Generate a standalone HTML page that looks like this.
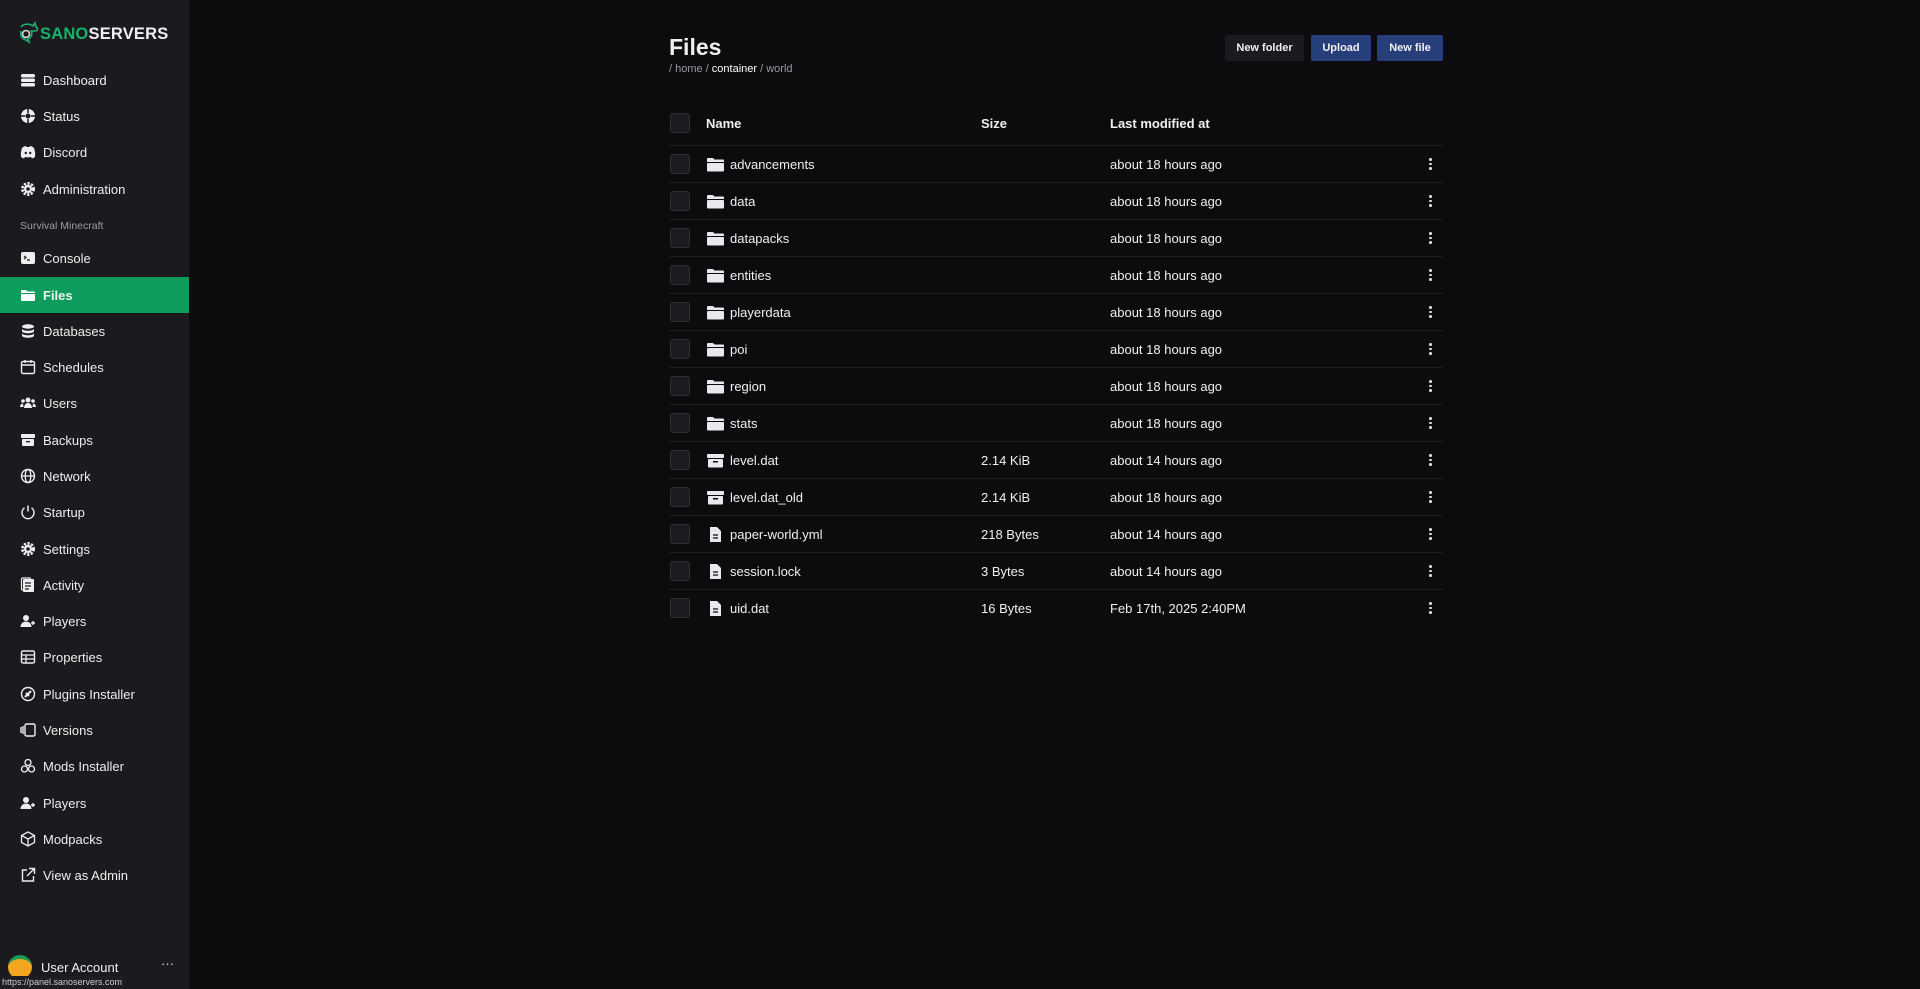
<!DOCTYPE html>
<html><head><meta charset="utf-8"><style>
*{box-sizing:border-box;margin:0;padding:0}
body{width:1920px;height:989px;background:#0c0c0e;font-family:"Liberation Sans",sans-serif;color:#f0f0f2;overflow:hidden;position:relative}
#side{position:absolute;left:0;top:0;width:189px;height:989px;background:#1b1b1f}
.logo{position:absolute;left:17px;top:21px;font-weight:bold;font-size:16.5px;letter-spacing:.2px}
.logo .g{color:#16b36a}
.nav{position:absolute;left:0;width:189px;height:36px;display:flex;align-items:center;font-size:13px;color:#eee}
.nav svg{position:absolute;left:20px;width:16px;height:16px}
.nav span{position:absolute;left:43px}
.nav.act{background:#0d9c5c;font-weight:bold}
.lbl{position:absolute;left:20px;top:220px;font-size:10.5px;color:#9a9aa3}
h1{position:absolute;left:669px;top:34px;font-size:23px;font-weight:bold}
.bc{position:absolute;left:669px;top:63px;font-size:11px;color:#9a9aa0}
.bc b{color:#fff;font-weight:normal}
.btn{position:absolute;top:35px;height:26px;font-size:11px;font-weight:bold;display:flex;align-items:center;justify-content:center;border-radius:2px}
.cb{position:absolute;left:670px;width:20px;height:20px;border:1px solid #2e2e33;background:#1c1c20;border-radius:3px}
.row{position:absolute;left:669px;width:774px;height:37px;border-top:1px solid #1e1e22;font-size:13px}
.row .t{position:absolute;top:11px}
.row svg{position:absolute;left:38px;top:11px}
.dots{position:absolute;left:760px;top:12px;width:3px}
.dots i{display:block;width:2.5px;height:2.5px;background:#ddd;border-radius:50%;margin-bottom:2px}
</style></head><body>
<div id="side">
<div class="logo"><svg width="22" height="24" viewBox="0 0 22 24" style="vertical-align:-6px;margin-right:1px"><path d="M4 6c2-3 8-4 12-1l2-3 1 4c2 1 2 3 0 4h-5c2 3 0 7-3 8l1 3-3-2c-4-1-6-5-5-9" fill="none" stroke="#16b36a" stroke-width="1.6"/><circle cx="9" cy="13" r="3.5" fill="none" stroke="#ddd" stroke-width="1.6"/></svg><span class="g">SANO</span>SERVERS</div>
<div class="nav" style="top:62px"><svg viewBox="0 0 16 16"><rect x="1" y="2" width="14" height="3.5" rx="1.5" fill="#eee"/><rect x="1" y="6.5" width="14" height="3.5" rx="1.5" fill="#eee"/><rect x="1" y="11" width="14" height="3.5" rx="1.5" fill="#eee"/></svg><span>Dashboard</span></div>
<div class="nav" style="top:98px"><svg viewBox="0 0 16 16"><circle cx="8" cy="8" r="7" fill="#eee"/><circle cx="8" cy="8" r="2.5" fill="#1b1b1f"/><path d="M8 1v4M8 11v4M1 8h4M11 8h4" stroke="#1b1b1f" stroke-width="1.5"/></svg><span>Status</span></div>
<div class="nav" style="top:134px"><svg viewBox="0 0 16 16"><path d="M2 4c2-2 4-2 4-2l.5 1h3l.5-1s2 0 4 2c1 3 1.5 6 1 9-1.5 1-3 1.5-3 1.5l-1-1.5c-2 .5-4 .5-6 0l-1 1.5S2.5 14 1 13c-.5-3 0-6 1-9z" fill="#eee"/><circle cx="5.8" cy="9" r="1.2" fill="#1b1b1f"/><circle cx="10.2" cy="9" r="1.2" fill="#1b1b1f"/></svg><span>Discord</span></div>
<div class="nav" style="top:171px"><svg viewBox="0 0 16 16"><circle cx="8" cy="8" r="5.5" fill="none" stroke="#eee" stroke-width="3" stroke-dasharray="2.2 1.4"/><circle cx="8" cy="8" r="4" fill="#eee"/><circle cx="8" cy="8" r="1.8" fill="#1b1b1f"/></svg><span>Administration</span></div>
<div class="lbl">Survival Minecraft</div>
<div class="nav" style="top:240px"><svg viewBox="0 0 16 16"><rect x="1" y="2" width="14" height="12" rx="2" fill="#eee"/><path d="M4 6l2 1.5L4 9M7 10h3" stroke="#1b1b1f" stroke-width="1.2" fill="none"/></svg><span>Console</span></div>
<div class="nav act" style="top:277px"><svg viewBox="0 0 16 16"><path d="M1 4a1 1 0 011-1h4l1.5 1.5H14a1 1 0 011 1V6H1z" fill="#fff"/><rect x="1" y="7" width="14" height="7" rx="1" fill="#fff"/></svg><span>Files</span></div>
<div class="nav" style="top:313px"><svg viewBox="0 0 16 16"><ellipse cx="8" cy="3.5" rx="6" ry="2.2" fill="#eee"/><path d="M2 5.5c0 3 12 3 12 0v2.5c0 3-12 3-12 0zM2 10c0 3 12 3 12 0v2.5c0 3-12 3-12 0z" fill="#eee"/></svg><span>Databases</span></div>
<div class="nav" style="top:349px"><svg viewBox="0 0 16 16"><rect x="1.5" y="2.5" width="13" height="12" rx="1.5" fill="none" stroke="#eee" stroke-width="1.4"/><path d="M1.5 6h13M5 1v3M11 1v3" stroke="#eee" stroke-width="1.4"/></svg><span>Schedules</span></div>
<div class="nav" style="top:385px"><svg viewBox="0 0 16 16"><circle cx="8" cy="5" r="2.5" fill="#eee"/><circle cx="3" cy="6" r="1.8" fill="#eee"/><circle cx="13" cy="6" r="1.8" fill="#eee"/><path d="M4 13c0-3 2-5 4-5s4 2 4 5zM0 12c0-2 1.5-3.5 3-3.5L3.5 12zM16 12c0-2-1.5-3.5-3-3.5L12.5 12z" fill="#eee"/></svg><span>Users</span></div>
<div class="nav" style="top:422px"><svg viewBox="0 0 16 16"><rect x="1" y="2" width="14" height="4" rx="1" fill="#eee"/><rect x="2" y="7" width="12" height="7" rx="1" fill="#eee"/><rect x="6" y="9" width="4" height="1.3" fill="#1b1b1f"/></svg><span>Backups</span></div>
<div class="nav" style="top:458px"><svg viewBox="0 0 16 16"><circle cx="8" cy="8" r="6.5" fill="none" stroke="#eee" stroke-width="1.4"/><ellipse cx="8" cy="8" rx="2.8" ry="6.5" fill="none" stroke="#eee" stroke-width="1.3"/><path d="M1.5 8h13" stroke="#eee" stroke-width="1.3"/></svg><span>Network</span></div>
<div class="nav" style="top:494px"><svg viewBox="0 0 16 16"><path d="M8 1.5v6" stroke="#eee" stroke-width="1.5"/><path d="M4.5 3.8a6 6 0 107 0" fill="none" stroke="#eee" stroke-width="1.4"/></svg><span>Startup</span></div>
<div class="nav" style="top:531px"><svg viewBox="0 0 16 16"><circle cx="8" cy="8" r="5.5" fill="none" stroke="#eee" stroke-width="3" stroke-dasharray="2.2 1.4"/><circle cx="8" cy="8" r="4" fill="#eee"/><circle cx="8" cy="8" r="1.8" fill="#1b1b1f"/></svg><span>Settings</span></div>
<div class="nav" style="top:567px"><svg viewBox="0 0 16 16"><rect x="3" y="2" width="11" height="13" rx="1" fill="#eee"/><rect x="1.5" y="1" width="9" height="12" rx="1" fill="none" stroke="#eee" stroke-width="1.2"/><path d="M5 6h6M5 9h6M5 12h4" stroke="#1b1b1f" stroke-width="1.2"/></svg><span>Activity</span></div>
<div class="nav" style="top:603px"><svg viewBox="0 0 16 16"><circle cx="6" cy="5" r="3" fill="#eee"/><path d="M0.5 14c0-3.5 2.5-5.5 5.5-5.5s5.5 2 5.5 5.5z" fill="#eee"/><path d="M11 10h4M13 8v4" stroke="#eee" stroke-width="1.4"/></svg><span>Players</span></div>
<div class="nav" style="top:639px"><svg viewBox="0 0 16 16"><rect x="1.5" y="2" width="13" height="12" rx="1.5" fill="none" stroke="#eee" stroke-width="1.4"/><path d="M1.5 6h13M1.5 10h13M6 6v8" stroke="#eee" stroke-width="1.3"/></svg><span>Properties</span></div>
<div class="nav" style="top:676px"><svg viewBox="0 0 16 16"><circle cx="8" cy="8" r="6.5" fill="none" stroke="#eee" stroke-width="1.4"/><path d="M5 11l6-6M6 7l3 3" stroke="#eee" stroke-width="2"/></svg><span>Plugins Installer</span></div>
<div class="nav" style="top:712px"><svg viewBox="0 0 16 16"><rect x="5" y="2" width="10" height="12" rx="1.5" fill="none" stroke="#eee" stroke-width="1.4"/><path d="M3 4v8M1 5v6" stroke="#eee" stroke-width="1.4"/></svg><span>Versions</span></div>
<div class="nav" style="top:748px"><svg viewBox="0 0 16 16"><g fill="none" stroke="#eee" stroke-width="1.3"><circle cx="8" cy="4.5" r="3"/><circle cx="4.5" cy="11" r="3"/><circle cx="11.5" cy="11" r="3"/></g></svg><span>Mods Installer</span></div>
<div class="nav" style="top:785px"><svg viewBox="0 0 16 16"><circle cx="6" cy="5" r="3" fill="#eee"/><path d="M0.5 14c0-3.5 2.5-5.5 5.5-5.5s5.5 2 5.5 5.5z" fill="#eee"/><path d="M11 10h4M13 8v4" stroke="#eee" stroke-width="1.4"/></svg><span>Players</span></div>
<div class="nav" style="top:821px"><svg viewBox="0 0 16 16"><path d="M8 1l6.5 3.5v7L8 15l-6.5-3.5v-7z M1.5 4.5L8 8l6.5-3.5M8 8v7" fill="none" stroke="#eee" stroke-width="1.3"/></svg><span>Modpacks</span></div>
<div class="nav" style="top:857px"><svg viewBox="0 0 16 16"><path d="M7 3H2.5v11h11V9" fill="none" stroke="#eee" stroke-width="1.4"/><path d="M9 1.5h5.5V7M14.5 1.5L7 9" fill="none" stroke="#eee" stroke-width="1.4"/></svg><span>View as Admin</span></div>
<div style="position:absolute;left:8px;top:955px;width:24px;height:24px;border-radius:50%;background:#f2a51e;border-top:4px solid #1a9c58"></div>
<div style="position:absolute;left:41px;top:960px;font-size:13px">User Account</div>
<div style="position:absolute;left:161px;top:956px;font-size:13px;color:#ddd">···</div>
<div style="position:absolute;left:0;top:976px;height:13px;width:124px;background:#1e1e22;font-size:9px;color:#ccc;padding:1px 2px;border-radius:0 3px 0 0">https://panel.sanoservers.com</div>
</div>
<h1>Files</h1>
<div class="bc">/ home / <b>container</b> / world</div>
<div class="btn" style="left:1225px;width:79px;background:#1b1b1f">New folder</div>
<div class="btn" style="left:1311px;width:60px;background:#263f7b">Upload</div>
<div class="btn" style="left:1377px;width:66px;background:#263f7b">New file</div>
<div class="cb" style="top:113px"></div>
<div style="position:absolute;top:116px;font-size:13px;font-weight:bold;left:706px">Name</div>
<div style="position:absolute;top:116px;font-size:13px;font-weight:bold;left:981px">Size</div>
<div style="position:absolute;top:116px;font-size:13px;font-weight:bold;left:1110px">Last modified at</div>
<div id="rows"></div>
<script>
var d=[["advancements","","about 18 hours ago",0],["data","","about 18 hours ago",0],["datapacks","","about 18 hours ago",0],["entities","","about 18 hours ago",0],["playerdata","","about 18 hours ago",0],["poi","","about 18 hours ago",0],["region","","about 18 hours ago",0],["stats","","about 18 hours ago",0],["level.dat","2.14 KiB","about 14 hours ago",1],["level.dat_old","2.14 KiB","about 18 hours ago",1],["paper-world.yml","218 Bytes","about 14 hours ago",2],["session.lock","3 Bytes","about 14 hours ago",2],["uid.dat","16 Bytes","Feb 17th, 2025 2:40PM",2]];
var ic=['<svg width="17" height="15" viewBox="0 0 17 15"><path d="M0 2a1 1 0 011-1h5l1.5 1.5H16a1 1 0 011 1V5H0z" fill="#e8e8ee"/><rect x="0" y="6" width="17" height="8.5" rx="1" fill="#e8e8ee"/></svg>',
'<svg width="17" height="15" viewBox="0 0 17 15"><rect x="0" y="1" width="17" height="4" rx="1" fill="#e8e8ee"/><rect x="1" y="6" width="15" height="8.5" rx="1" fill="#e8e8ee"/><rect x="6" y="8" width="5" height="1.5" fill="#0c0c0e"/></svg>',
'<svg width="17" height="15" viewBox="0 0 17 15"><path d="M3 0h7l4 4v11H3z" fill="#e8e8ee"/><path d="M6 8h5M6 11h5" stroke="#0c0c0e" stroke-width="1.2"/></svg>'];
var h='';d.forEach(function(r,i){var t=145+i*37;h+='<div class="row" style="top:'+t+'px"><div class="cb" style="left:1px;top:8px"></div>'+ic[r[3]]+'<div class="t" style="left:61px">'+r[0]+'</div><div class="t" style="left:312px">'+r[1]+'</div><div class="t" style="left:441px">'+r[2]+'</div><div class="dots"><i></i><i></i><i></i></div></div>';});
document.getElementById('rows').innerHTML=h;
</script>
</body></html>
